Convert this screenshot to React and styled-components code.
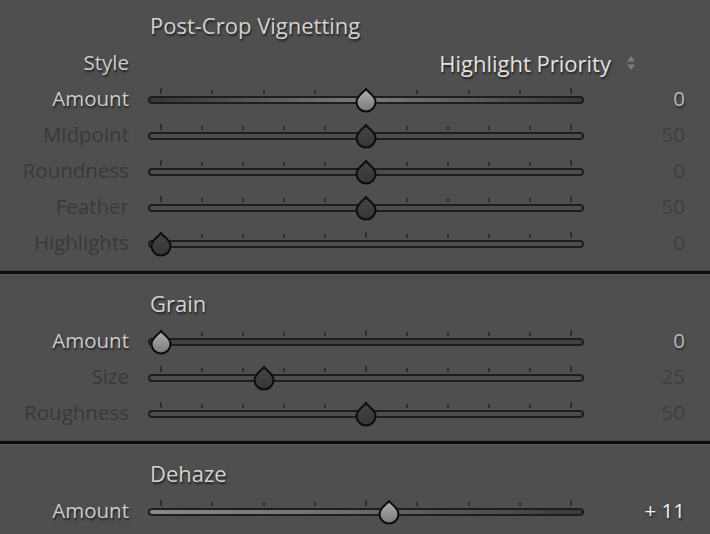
import React from "react";
import styled, { createGlobalStyle } from "styled-components";

const GlobalStyle = createGlobalStyle`
  html, body {
    margin: 0;
    padding: 0;
    background: #4f4f4f;
  }
  body {
    font-family: "Open Sans", "DejaVu Sans", sans-serif;
  }
`;

const RANGE_START = 13;
const RANGE_WIDTH = 410;

const TRACKS = {
  plain: "#4d4d4d",
  dark: "#414141",
  vignette: "linear-gradient(to right, #363636, #7a7a7a 50%, #3a3a3a)",
  dehaze: "linear-gradient(to right, #8a8a8a, #6e6e6e 45%, #3a3a3a)"
};

const SECTIONS = [
  {
    title: "Post-Crop Vignetting",
    first: true,
    popup: { label: "Style", value: "Highlight Priority" },
    rows: [
      { label: "Amount", value: "0", pos: 0.5, ticks: 9, active: true, track: "vignette" },
      { label: "Midpoint", value: "50", pos: 0.5, ticks: 11 },
      { label: "Roundness", value: "0", pos: 0.5, ticks: 11 },
      { label: "Feather", value: "50", pos: 0.5, ticks: 11 },
      { label: "Highlights", value: "0", pos: 0, ticks: 11 }
    ]
  },
  {
    title: "Grain",
    rows: [
      { label: "Amount", value: "0", pos: 0, ticks: 11, active: true, track: "dark" },
      { label: "Size", value: "25", pos: 0.25, ticks: 11 },
      { label: "Roughness", value: "50", pos: 0.5, ticks: 11 }
    ]
  },
  {
    title: "Dehaze",
    rows: [
      { label: "Amount", value: "+ 11", pos: 0.555, ticks: 9, active: true, track: "dehaze", bright: true }
    ]
  }
];

const Panel = styled.div`
  width: 710px;
  height: 534px;
  overflow: hidden;
`;

const Section = styled.section`
  padding: ${p => (p.$first ? "7px 0 9px" : "10px 0 9px")};
`;

const Divider = styled.div`
  height: 3px;
  background: #0c0c0c;
  border-top: 1px solid #444444;
  border-bottom: 1px solid #585858;
`;

const Title = styled.h3`
  margin: 0 0 0 150px;
  height: 38px;
  line-height: 36px;
  font-size: 22px;
  font-weight: 400;
  color: #d2d2d2;
  text-shadow: 1px 2px 2px rgba(0, 0, 0, 0.6);
`;

const Row = styled.div`
  display: grid;
  grid-template-columns: 129px 436px 82px;
  column-gap: 19px;
  height: 36px;
  align-items: start;
`;

const Label = styled.div`
  text-align: right;
  font-size: 20.5px;
  line-height: 34px;
  color: ${p => (p.$active ? "#cbcbcb" : "#393939")};
  text-shadow: ${p => (p.$active ? "1px 2px 2px rgba(0, 0, 0, 0.6)" : "none")};
`;

const Value = styled.div`
  text-align: right;
  font-size: 20.5px;
  line-height: 34px;
  color: ${p => (p.$bright ? "#f2f2f2" : p.$active ? "#b8b8b8" : "#3f3f3f")};
  text-shadow: ${p => (p.$active ? "1px 2px 2px rgba(0, 0, 0, 0.5)" : "none")};
`;

const PopupCell = styled.div`
  grid-column: 2 / span 2;
  height: 36px;
  display: flex;
  justify-content: flex-end;
  align-items: center;
  gap: 15px;
  padding-right: 49px;
`;

const PopupText = styled.span`
  font-size: 22px;
  line-height: 36px;
  color: #e2e2e2;
  text-shadow: 1px 2px 2px rgba(0, 0, 0, 0.6);
`;

const SliderBox = styled.div`
  position: relative;
  height: 36px;
`;

const Track = styled.div`
  position: absolute;
  left: 0;
  right: 0;
  top: 15px;
  height: 4px;
  border: 2px solid #1e1e1e;
  border-radius: 5px;
  background: ${p => TRACKS[p.$kind || "plain"]};
`;

const Tick = styled.span`
  position: absolute;
  width: 2px;
  margin-left: -1px;
  top: ${p => (p.$tall ? 7 : 9)}px;
  height: ${p => (p.$tall ? 6 : 4)}px;
  background: #2f2f2f;
`;

const ThumbSvg = styled.svg`
  position: absolute;
  top: 7px;
  width: 22px;
  height: 24px;
  margin-left: -11px;
  overflow: visible;
`;

const Thumb = ({ x, active, id }) => (
  <ThumbSvg viewBox="0 0 22 24" style={{ left: x }}>
    <defs>
      <linearGradient id={id} x1="0" y1="0" x2="0" y2="1">
        <stop offset="0" stopColor={active ? "#b0b0b0" : "#444444"} />
        <stop offset="1" stopColor={active ? "#7a7a7a" : "#363636"} />
      </linearGradient>
    </defs>
    <path
      d="M11 1 C12.6 4 20.5 7.6 20.5 14 A9.5 9.5 0 0 1 1.5 14 C1.5 7.6 9.4 4 11 1 Z"
      fill={`url(#${id})`}
      stroke="#0d0d0d"
      strokeWidth="2"
      strokeLinejoin="round"
    />
  </ThumbSvg>
);

const Slider = ({ row, id }) => {
  const ticks = [];
  for (let i = 0; i < row.ticks; i++) {
    const x = RANGE_START + (RANGE_WIDTH * i) / (row.ticks - 1);
    const tall = i === 0 || i === row.ticks - 1 || i === (row.ticks - 1) / 2;
    ticks.push(<Tick key={i} $tall={tall} style={{ left: x }} />);
  }
  return (
    <SliderBox>
      {ticks}
      <Track $kind={row.track} />
      <Thumb x={RANGE_START + RANGE_WIDTH * row.pos} active={row.active} id={id} />
    </SliderBox>
  );
};

const Arrows = () => (
  <svg width="10" height="16" viewBox="0 0 10 16">
    <path d="M5 1 L9 6.5 H1 Z" fill="#7c7c7c" />
    <path d="M5 15 L9 9.5 H1 Z" fill="#7c7c7c" />
  </svg>
);

export default function App() {
  return (
    <Panel>
      <GlobalStyle />
      {SECTIONS.map((section, si) => (
        <React.Fragment key={section.title}>
          {si > 0 && <Divider />}
          <Section $first={section.first}>
            <Title>{section.title}</Title>
            {section.popup && (
              <Row>
                <Label $active>{section.popup.label}</Label>
                <PopupCell>
                  <PopupText>{section.popup.value}</PopupText>
                  <Arrows />
                </PopupCell>
              </Row>
            )}
            {section.rows.map((row, ri) => (
              <Row key={row.label + ri}>
                <Label $active={row.active}>{row.label}</Label>
                <Slider row={row} id={`thumb-${si}-${ri}`} />
                <Value $active={row.active} $bright={row.bright}>
                  {row.value}
                </Value>
              </Row>
            ))}
          </Section>
        </React.Fragment>
      ))}
    </Panel>
  );
}
